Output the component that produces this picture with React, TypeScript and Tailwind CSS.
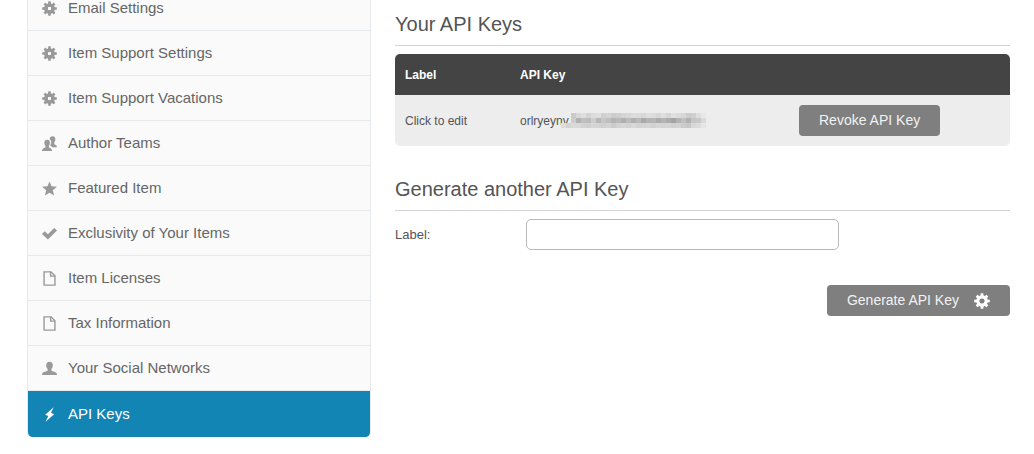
import React from 'react';

type IconProps = { className?: string };

const CogIcon: React.FC<IconProps & { hole?: number }> = ({ className, hole = 2.1 }) => (
  <svg viewBox="0 0 16 16" className={className} aria-hidden="true">
    <g fill="currentColor">
      {[0, 45, 90, 135].map((angle) => (
        <path key={angle} d="M6.300 5L6.700.2h2.600L9.700 5v6l-.4 4.800H6.700L6.300 11z" transform={`rotate(${angle} 8 8)`} mask={`url(#cog-${hole * 10})`} />
      ))}
    </g>
    <circle cx="8" cy="8" r={(5.7 + hole) / 2} fill="none" stroke="currentColor" strokeWidth={5.7 - hole} />
    <mask id={`cog-${hole * 10}`} maskUnits="userSpaceOnUse" x="0" y="0" width="16" height="16">
      <rect width="16" height="16" fill="white" />
      <circle cx="8" cy="8" r={hole} fill="black" />
    </mask>
  </svg>
);

const TeamIcon: React.FC<IconProps> = ({ className }) => (
  <svg viewBox="0 0 16 16" className={className} fill="currentColor" aria-hidden="true">
    <path d="M8.200 3.400C8.200 1.300 9.300.2 11.200.2s3 1.100 3 3.200c0 1.400-.4 2.500-1.100 3.200v1.600c0 1.200 2.900 1 2.900 3.800h-4.800c-.4-.7-1.200-1.200-2.200-1.600V9.300c.7-.9 1-2 .8-3.400-.2-1-.7-1.700-1.600-2.100z" />
    <path d="M5.500 4.100c2 0 3 1.200 3 3.100 0 1.400-.5 2.500-1.200 3.200v1.300c0 1.100 3.500 1 3.500 4.300H0c0-3.300 3.700-3.200 3.700-4.300v-1.300c-.8-.7-1.200-1.800-1.200-3.200 0-1.900 1-3.100 3-3.100z" />
  </svg>
);

const StarIcon: React.FC<IconProps> = ({ className }) => (
  <svg viewBox="0 0 16 16" className={className} fill="currentColor" aria-hidden="true">
    <path d="M8 .4l2.200 5.300 5.700.4-4.400 3.700 1.400 5.700L8 12.500l-4.900 3 1.400-5.700L.1 6.100l5.700-.4z" />
  </svg>
);

const CheckIcon: React.FC<IconProps> = ({ className }) => (
  <svg viewBox="0 0 16 16" className={className} fill="currentColor" aria-hidden="true">
    <path d="M0 8.500l2.900-2.900 3.400 3.200L13.100 2 16 4.900l-9.700 9.600z" />
  </svg>
);

const PageIcon: React.FC<IconProps> = ({ className }) => (
  <svg viewBox="0 0 16 16" className={className} fill="none" stroke="currentColor" strokeWidth="1.500" aria-hidden="true">
    <path d="M2.200.9h7.400l4.200 4.200v10H2.200z" />
    <path d="M9.200.9v4.600h4.600" />
  </svg>
);

const PersonIcon: React.FC<IconProps> = ({ className }) => (
  <svg viewBox="0 0 16 16" className={className} fill="currentColor" aria-hidden="true">
    <path d="M8 .9c2.300 0 3.500 1.400 3.500 3.600 0 1.700-.6 3.100-1.500 4v1.300c0 .8.900 1 2.300 1.400 2.400.7 3.700 1.400 3.700 3.700H0c0-2.300 1.300-3 3.700-3.700C5.100 10.800 6 10.600 6 9.800V8.500c-.9-.9-1.500-2.300-1.500-4C4.500 2.300 5.700.9 8 .9z" />
  </svg>
);

const BoltIcon: React.FC<IconProps> = ({ className }) => (
  <svg viewBox="0 0 16 16" className={className} fill="currentColor" aria-hidden="true">
    <path d="M12.500.2L3.400 8.300l3.300 1.400L3.800 15.800l9.100-8.100-3.300-1.500z" />
  </svg>
);

const menu = [
  { label: 'Email Settings', Icon: CogIcon },
  { label: 'Item Support Settings', Icon: CogIcon },
  { label: 'Item Support Vacations', Icon: CogIcon },
  { label: 'Author Teams', Icon: TeamIcon },
  { label: 'Featured Item', Icon: StarIcon },
  { label: 'Exclusivity of Your Items', Icon: CheckIcon },
  { label: 'Item Licenses', Icon: PageIcon },
  { label: 'Tax Information', Icon: PageIcon },
  { label: 'Your Social Networks', Icon: PersonIcon },
  { label: 'API Keys', Icon: BoltIcon, active: true },
];

// grey levels of the mosaic that hides the rest of the key, 0 leaves a gap
const mosaic = [
  [0, 0, 202, 216, 222, 212, 220, 222, 208, 212, 204, 206, 212, 214, 220, 218, 216, 222, 220, 214, 222, 214, 224, 220, 214, 204, 208, 222, 232],
  [0, 0, 204, 178, 192, 188, 206, 184, 198, 190, 180, 186, 176, 188, 176, 186, 170, 180, 182, 172, 180, 172, 164, 180, 192, 178, 198, 200, 218],
  [220, 212, 218, 216, 210, 208, 214, 212, 208, 212, 204, 210, 214, 210, 216, 210, 212, 214, 210, 214, 212, 214, 208, 212, 204, 200, 216, 220, 230],
];

const HiddenKey: React.FC<IconProps> = ({ className }) => (
  <svg viewBox="0 0 145 15" className={className} shapeRendering="crispEdges" aria-hidden="true">
    {mosaic.map((row, y) =>
      row.map((grey, x) =>
        grey ? <rect key={`${x}-${y}`} x={x * 5} y={y * 5} width="5" height="5" fill={`rgb(${grey},${grey},${grey})`} /> : null
      )
    )}
  </svg>
);

const SideMenu: React.FC = () => (
  <nav className="-mt-3.5 w-[344px] shrink-0">
    <ul className="overflow-hidden rounded-b-[5px] border-x border-[#e6eaed] bg-[#fafafa]">
      {menu.map(({ label, Icon, active }) => (
        <li key={label}>
          <a
            href="#"
            aria-current={active ? 'page' : undefined}
            className={
              active
                ? 'flex h-[46px] items-center gap-[11px] bg-[#1285b4] pl-3.5 text-[15px] text-white'
                : 'flex h-[45px] items-center gap-[11px] border-b border-[#e6eaed] pl-3.5 text-[15px] text-[#666666]'
            }
          >
            <Icon className={active ? 'size-[15px]' : 'size-[15px] text-[#999999]'} />
            {label}
          </a>
        </li>
      ))}
    </ul>
  </nav>
);

const SectionHeading: React.FC<{ children: React.ReactNode }> = ({ children }) => (
  <h2 className="border-b border-[#d4d4d4] pb-[7px] text-[20px] leading-7 text-[#545454]">{children}</h2>
);

const App: React.FC = () => (
  <div className="flex min-h-screen gap-6 overflow-hidden bg-white pr-6 pl-[27px] font-['Liberation_Sans',Arial,sans-serif]">
    <SideMenu />
    <main className="min-w-0 flex-1 pt-2.5 text-[13px] text-[#545454]">
      <SectionHeading>Your API Keys</SectionHeading>
      <div className="mt-2 overflow-hidden rounded-[5px]">
        <table className="w-full table-fixed text-left text-[12px]">
          <thead className="bg-[#444444] text-white">
            <tr className="h-[41px]">
              <th className="w-[115px] pl-2.5 font-bold">Label</th>
              <th className="w-[279px] pl-2.5 font-bold">API Key</th>
              <th aria-label="Actions" />
            </tr>
          </thead>
          <tbody className="bg-[#ededed]">
            <tr className="h-[51px]">
              <td className="pl-2.5">Click to edit</td>
              <td className="pl-2.5">
                <div className="flex items-center">
                  <span>orlryeynv</span>
                  <HiddenKey className="-ml-2 h-[15px] w-[145px]" />
                </div>
              </td>
              <td className="pl-2.5">
                <button type="button" className="h-[31px] rounded-[4px] bg-[#7f7f7f] px-5 text-[14px] text-[#f2f2f2]">
                  Revoke API Key
                </button>
              </td>
            </tr>
          </tbody>
        </table>
      </div>

      <div className="mt-[29px]">
        <SectionHeading>Generate another API Key</SectionHeading>
        <form>
          <div className="mt-2 flex items-center">
            <label htmlFor="key-label" className="w-[131px]">Label:</label>
            <input id="key-label" type="text" className="h-[31px] w-[313px] rounded-[5px] border border-[#b9b9b9] bg-white px-2" />
          </div>
          <div className="mt-[35px] flex justify-end">
            <button type="button" className="flex h-[31px] items-center gap-[15px] rounded-[4px] bg-[#7f7f7f] px-5 text-[14px] text-[#f2f2f2]">
              Generate API Key
              <CogIcon className="size-4 text-white" hole={2.8} />
            </button>
          </div>
        </form>
      </div>
    </main>
  </div>
);

export default App;
